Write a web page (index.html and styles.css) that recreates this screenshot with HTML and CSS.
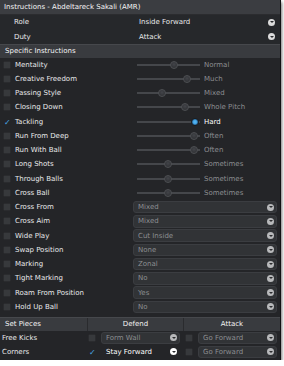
FILE: index.html
```html
<!DOCTYPE html>
<html lang="en">
<head>
    <meta charset="UTF-8">
    <title>Instructions - Abdeltareck Sakali (AMR)</title>
    <link rel="stylesheet" href="styles.css">
</head>
<body>
    <div class="panel">
        <div class="title">Instructions - Abdeltareck Sakali (AMR)</div>

        <div class="role-row">
            <span class="role-label">Role</span>
            <span class="role-value">Inside Forward</span>
            <span class="arrow"></span>
        </div>
        <div class="role-row">
            <span class="role-label">Duty</span>
            <span class="role-value">Attack</span>
            <span class="arrow"></span>
        </div>

        <div class="section">Specific Instructions</div>

        <div class="row">
            <span class="check"></span><span class="label">Mentality</span>
            <div class="slider"><span class="knob" style="left: 37px"></span></div>
            <span class="value">Normal</span>
        </div>
        <div class="row">
            <span class="check"></span><span class="label">Creative Freedom</span>
            <div class="slider"><span class="knob" style="left: 50px"></span></div>
            <span class="value">Much</span>
        </div>
        <div class="row">
            <span class="check"></span><span class="label">Passing Style</span>
            <div class="slider"><span class="knob" style="left: 25px"></span></div>
            <span class="value">Mixed</span>
        </div>
        <div class="row">
            <span class="check"></span><span class="label">Closing Down</span>
            <div class="slider"><span class="knob" style="left: 48px"></span></div>
            <span class="value">Whole Pitch</span>
        </div>
        <div class="row active">
            <span class="check checked">&#10003;</span><span class="label">Tackling</span>
            <div class="slider"><span class="knob" style="left: 58px"></span></div>
            <span class="value">Hard</span>
        </div>
        <div class="row">
            <span class="check"></span><span class="label">Run From Deep</span>
            <div class="slider"><span class="knob" style="left: 57px"></span></div>
            <span class="value">Often</span>
        </div>
        <div class="row">
            <span class="check"></span><span class="label">Run With Ball</span>
            <div class="slider"><span class="knob" style="left: 57px"></span></div>
            <span class="value">Often</span>
        </div>
        <div class="row">
            <span class="check"></span><span class="label">Long Shots</span>
            <div class="slider"><span class="knob" style="left: 31px"></span></div>
            <span class="value">Sometimes</span>
        </div>
        <div class="row">
            <span class="check"></span><span class="label">Through Balls</span>
            <div class="slider"><span class="knob" style="left: 31px"></span></div>
            <span class="value">Sometimes</span>
        </div>
        <div class="row">
            <span class="check"></span><span class="label">Cross Ball</span>
            <div class="slider"><span class="knob" style="left: 31px"></span></div>
            <span class="value">Sometimes</span>
        </div>

        <div class="row">
            <span class="check"></span><span class="label">Cross From</span>
            <div class="select">Mixed<span class="arrow"></span></div>
        </div>
        <div class="row">
            <span class="check"></span><span class="label">Cross Aim</span>
            <div class="select">Mixed<span class="arrow"></span></div>
        </div>
        <div class="row">
            <span class="check"></span><span class="label">Wide Play</span>
            <div class="select">Cut Inside<span class="arrow"></span></div>
        </div>
        <div class="row">
            <span class="check"></span><span class="label">Swap Position</span>
            <div class="select">None<span class="arrow"></span></div>
        </div>
        <div class="row">
            <span class="check"></span><span class="label">Marking</span>
            <div class="select">Zonal<span class="arrow"></span></div>
        </div>
        <div class="row">
            <span class="check"></span><span class="label">Tight Marking</span>
            <div class="select">No<span class="arrow"></span></div>
        </div>
        <div class="row">
            <span class="check"></span><span class="label">Roam From Position</span>
            <div class="select">Yes<span class="arrow"></span></div>
        </div>
        <div class="row">
            <span class="check"></span><span class="label">Hold Up Ball</span>
            <div class="select">No<span class="arrow"></span></div>
        </div>

        <div class="sp-head">
            <span class="sp-name">Set Pieces</span>
            <span class="sp-col">Defend</span>
            <span class="sp-col">Attack</span>
        </div>
        <div class="sp-row">
            <span class="sp-name">Free Kicks</span>
            <div class="sp-cell">
                <span class="check"></span>
                <div class="select">Form Wall<span class="arrow"></span></div>
            </div>
            <div class="sp-cell">
                <span class="check"></span>
                <div class="select">Go Forward<span class="arrow"></span></div>
            </div>
        </div>
        <div class="sp-row">
            <span class="sp-name">Corners</span>
            <div class="sp-cell">
                <span class="check checked">&#10003;</span>
                <div class="select open">Stay Forward<span class="arrow"></span></div>
            </div>
            <div class="sp-cell">
                <span class="check"></span>
                <div class="select">Go Forward<span class="arrow"></span></div>
            </div>
        </div>
    </div>
</body>
</html>
```

FILE: styles.css
```css
* {
    margin: 0;
    padding: 0;
    box-sizing: border-box;
}

body {
    background: #ffffff;
    font-family: "DejaVu Sans", Verdana, sans-serif;
    font-size: 7px;
    color: #e8e9ea;
}

.panel {
    width: 281px;
    height: 360px;
    background: #242528;
    border-right: 1px solid #101113;
    box-shadow: 1px 2px 3px rgba(0, 0, 0, 0.55);
}

.title {
    height: 15px;
    line-height: 15px;
    padding-left: 4px;
    background: #3b3d41;
    border-bottom: 1px solid #2b2c2f;
    color: #f4f4f4;
}

.role-row {
    height: 14.5px;
    display: flex;
    align-items: center;
    background: #26282b;
    padding-right: 5px;
}

.role-label {
    width: 139px;
    padding-left: 14px;
}

.role-value {
    flex: 1;
}

.section {
    height: 13.6px;
    line-height: 13.6px;
    padding-left: 5px;
    background: #393b3f;
    border-top: 1px solid #46484c;
    color: #f4f4f4;
}

.row {
    height: 14.25px;
    display: flex;
    align-items: center;
}

.check {
    width: 8px;
    height: 8px;
    margin-left: 3px;
    border-radius: 1.5px;
    background: #37393c;
    border: 1px solid #2a2b2e;
    flex: none;
    color: #4aa8e8;
    font-size: 8px;
    line-height: 7px;
    text-align: center;
}

.check.checked {
    background: transparent;
    border-color: transparent;
}

.label {
    width: 122px;
    padding-left: 4px;
    flex: none;
}

.slider {
    position: relative;
    width: 63px;
    height: 2px;
    margin-left: 4px;
    background: #45474b;
    flex: none;
}

.knob {
    position: absolute;
    top: -3px;
    width: 8px;
    height: 8px;
    margin-left: -4px;
    border-radius: 50%;
    background: radial-gradient(circle at 50% 40%, #43454a, #2a2b2e);
    border: 1px solid #4d4f53;
}

.active .knob {
    background: radial-gradient(circle, #4fb2f2 30%, #2a6fa6 70%);
    border-color: #1a1b1d;
}

.value {
    margin-left: 4px;
    color: #8c8e91;
}

.active .value {
    color: #ffffff;
}

.select {
    flex: 1;
    height: 12.5px;
    margin-right: 3px;
    padding: 0 2px 0 4px;
    display: flex;
    align-items: center;
    justify-content: space-between;
    background: #313336;
    border: 1px solid #3b3d41;
    border-radius: 3px;
    color: #8c8e91;
}

.arrow {
    position: relative;
    width: 7px;
    height: 7px;
    border-radius: 50%;
    background: #dcdcdc;
    flex: none;
}

.arrow::after {
    content: "";
    position: absolute;
    left: 1.5px;
    top: 2.5px;
    border-left: 2px solid transparent;
    border-right: 2px solid transparent;
    border-top: 2.5px solid #2b2c2f;
}

.select .arrow {
    background: #b8b9bb;
}

.sp-head {
    height: 14px;
    margin-top: 2.9px;
    display: flex;
    align-items: center;
    background: #393b3f;
    border-top: 1px solid #46484c;
    color: #f4f4f4;
}

.sp-head .sp-name {
    width: 87px;
    padding-left: 5px;
    height: 100%;
    line-height: 13px;
}

.sp-col {
    width: 96px;
    height: 100%;
    line-height: 13px;
    text-align: center;
    border-left: 1px solid #2a2b2e;
}

.sp-col + .sp-col {
    width: 97px;
}

.sp-row {
    height: 14px;
    display: flex;
    align-items: center;
}

.sp-row .sp-name {
    width: 87px;
    padding-left: 2px;
}

.sp-cell {
    width: 96px;
    display: flex;
    align-items: center;
}

.sp-cell + .sp-cell {
    width: 97px;
}

.sp-cell .check {
    margin-left: 1px;
    margin-right: 5px;
}

.sp-cell + .sp-cell .check {
    margin-left: 2px;
}

.select.open {
    background: transparent;
    border-color: transparent;
    color: #ffffff;
}

.select.open .arrow {
    background: #ffffff;
}
```
